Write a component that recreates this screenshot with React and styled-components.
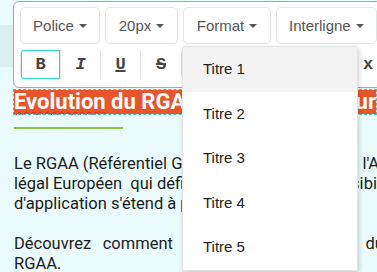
import React from "react";
import styled, {createGlobalStyle} from "styled-components";

const GlobalStyle = createGlobalStyle`
  html, body {
    margin: 0;
    overflow: hidden;
  }
  body {
    background: linear-gradient(#dcefee, #dcefee) 0 25px / 13px 42px no-repeat, #e9fbfa;
    font-family: Roboto, "Liberation Sans", sans-serif;
  }
`;

const formats = ["Titre 1", "Titre 2", "Titre 3", "Titre 4", "Titre 5"];

function Caret() {
  return (
    <CaretIcon width="8" height="4" viewBox="0 0 8 4">
      <path d="M0 0h8L4 4z" fill="currentColor" />
    </CaretIcon>
  );
}

function App() {
  return (
    <Page>
      <GlobalStyle />
      <Editor>
        <Toolbar>
          <Row>
            <DropButton $w={80}>Police<Caret /></DropButton>
            <DropButton $w={73}>20px<Caret /></DropButton>
            <DropWrap>
              <DropButton $w={88}>Format<Caret /></DropButton>
              <Menu>
                {formats.map((f, i) => (
                  <MenuItem key={f} $hover={i === 0}>{f}</MenuItem>
                ))}
              </Menu>
            </DropWrap>
            <DropButton>Interligne<Caret /></DropButton>
          </Row>
          <Row>
            <Group>
              <StyleButton $active>B</StyleButton>
              <StyleButton><i>I</i></StyleButton>
              <StyleButton><u>U</u></StyleButton>
              <StyleButton><s>S</s></StyleButton>
            </Group>
            <Group>
              <StyleButton>x</StyleButton>
              <StyleButton>x</StyleButton>
              <StyleButton>x</StyleButton>
              <StyleButton>x</StyleButton>
              <StyleButton>x</StyleButton>
            </Group>
          </Row>
        </Toolbar>
        <Content>
          <Heading><Spell>Evolution</Spell> du RGAA : un levier majeur</Heading>
          <Rule />
          <Para>
            Le RGAA (Référentiel Général d'Amélioration de l'Accessibilité) est le cadre<br />
            légal Européen&nbsp; qui définit ses critères d'accessibilité numérique. Son champ<br />
            d'application s'étend à plusieurs secteurs.
          </Para>
          <Para>
            <Stretched>Découvrez comment <Link>anticiper</Link> les refontes du</Stretched><br />
            RGAA.
          </Para>
        </Content>
      </Editor>
    </Page>
  );
}

const Page = styled.div`
  padding: 1px 0 0 13px;
`;

const Editor = styled.div`
  width: 600px;
`;

const Toolbar = styled.div`
  background: #fff;
  border: 1px solid #a5a8a8;
  border-radius: 6px 0 0 6px;
  padding: 5px 6px 8px;
  display: flex;
  flex-direction: column;
  gap: 6px;
`;

const Row = styled.div`
  display: flex;
  gap: 5px;
`;

const DropWrap = styled.div`
  position: relative;
`;

const DropButton = styled.button`
  height: 37px;
  width: ${p => (p.$w ? `${p.$w}px` : "auto")};
  padding: 0 12px;
  display: flex;
  align-items: center;
  justify-content: center;
  gap: 5px;
  background: #fff;
  border: 1px solid #e2e4e4;
  border-radius: 5px;
  color: #555;
  font: 15px "Liberation Sans", Arial, sans-serif;
  white-space: nowrap;
`;

const CaretIcon = styled.svg`
  display: block;
  margin-top: 1px;
`;

const Group = styled.div`
  display: flex;
  border: 1px solid #e2e4e4;
  border-radius: 4px;
`;

const StyleButton = styled.button`
  width: 40px;
  height: 29px;
  margin: -1px 0;
  padding: 0;
  background: #fff;
  border: 0;
  border-right: 1px solid #e2e4e4;
  box-shadow: ${p => (p.$active ? "inset 0 0 0 1px #2fd8c2" : "none")};
  border-radius: ${p => (p.$active ? "3px 0 0 3px" : "0")};
  color: #444;
  font: bold 17px "Liberation Mono", "Courier New", monospace;
  display: flex;
  align-items: center;
  justify-content: center;
  &:last-child {
    border-right: 0;
  }
  & u, & s {
    text-decoration-thickness: 2px;
  }
`;

const Menu = styled.ul`
  position: absolute;
  top: 39px;
  left: -1px;
  width: 174px;
  margin: 0;
  padding: 0;
  list-style: none;
  background: #fff;
  border: 1px solid #e2e4e4;
  border-radius: 3px;
  box-shadow: 1px 2px 5px rgba(0, 0, 0, 0.18);
  z-index: 2;
`;

const MenuItem = styled.li`
  height: 44.6px;
  padding: 0 20px;
  color: #222;
  font: 15px/44.6px "Liberation Sans", Arial, sans-serif;
  background: ${p => (p.$hover ? "#f3f3f3" : "#fff")};
`;

const Content = styled.div`
  padding: 2px 0 0 1px;
`;

const Heading = styled.h2`
  display: inline-block;
  margin: 0;
  padding: 0;
  background: #e9552a;
  color: #fff;
  font: bold 22px/24px Roboto, "Liberation Sans", sans-serif;
  white-space: nowrap;
  outline: 1px dashed #3cc7c0;
`;

const Spell = styled.span`
  text-decoration: underline wavy #e0201a;
  text-decoration-thickness: 1px;
  text-underline-offset: 2px;
`;

const Rule = styled.div`
  width: 109px;
  height: 2px;
  background: #8cc63e;
  margin: 13px 0 25px;
`;

const Para = styled.p`
  margin: 0 0 20px;
  color: #1c1c1c;
  font: 16.5px/20px Roboto, "Liberation Sans", sans-serif;
  white-space: nowrap;
`;

const Stretched = styled.span`
  word-spacing: 7.5px;
`;

const Link = styled.span`
  color: #b0763a;
`;

export default App;
